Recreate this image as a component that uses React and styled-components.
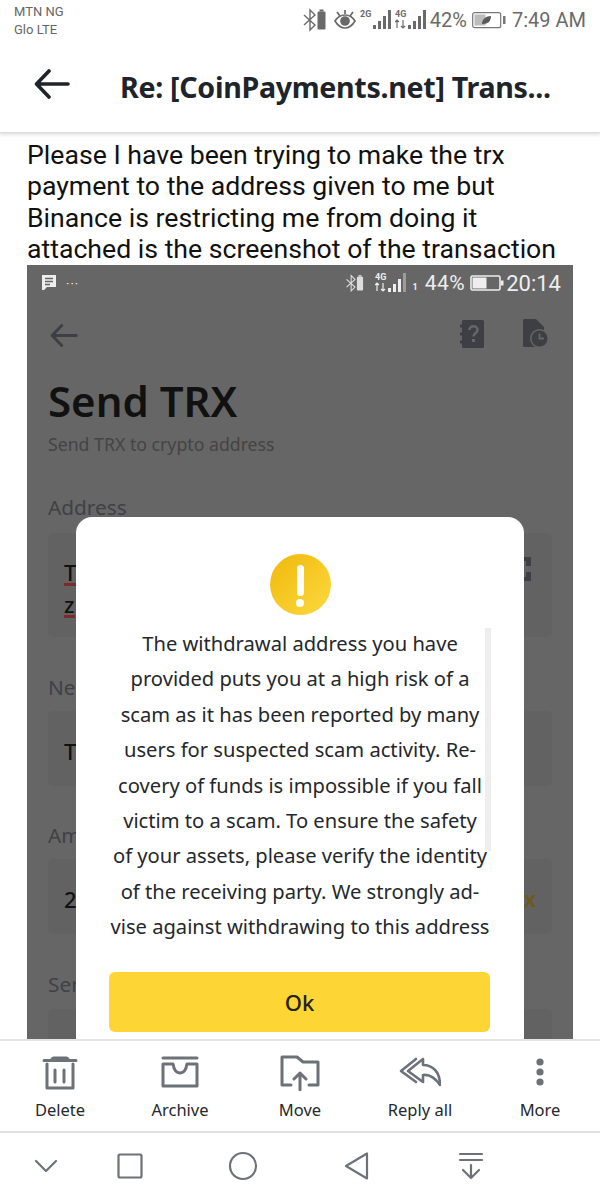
import styled, { createGlobalStyle } from 'styled-components';

const GlobalStyle = createGlobalStyle`
  html, body {
    margin: 0;
    padding: 0;
    background: #fff;
  }
`;

const Page = styled.div`
  display: flex;
  flex-direction: column;
  width: 600px;
  height: 1200px;
  overflow: hidden;
  background: #fff;
  font-family: Roboto, "Liberation Sans", sans-serif;
`;

const StatusBar = styled.div`
  display: flex;
  justify-content: space-between;
  height: 52px;
  padding: 3px 14px 0 14px;
  box-sizing: border-box;
`;

const Carriers = styled.div`
  font-size: 13px;
  line-height: 18px;
  color: #666;
`;

const StatusRight = styled.div`
  display: flex;
  align-items: center;
  align-self: flex-start;
  height: 34px;
  color: #6a6a6a;
  font-size: 20px;
`;

const BatteryPercent = styled.span`
  margin: 0 5px 0 3px;
`;

const StatusClock = styled.span`
  margin-left: 6px;
`;

const Header = styled.div`
  display: flex;
  align-items: center;
  height: 81px;
  padding: 0 0 12px 34px;
  box-sizing: border-box;
  border-bottom: 1px solid #ddd;
  box-shadow: 0 2px 3px rgba(0, 0, 0, 0.12);
  position: relative;
  z-index: 2;
  background: #fff;
`;

const HeaderBack = styled.div`
  display: flex;
  margin-bottom: 4px;
`;

const Title = styled.h1`
  margin: 0 0 0 50px;
  font-family: "Noto Sans", sans-serif;
  font-size: 28.6px;
  font-weight: 700;
  color: #20242a;
  white-space: nowrap;
  letter-spacing: -0.3px;
`;

const Message = styled.div`
  padding: 6.5px 0 0 27px;
  height: 132px;
  box-sizing: border-box;
  font-family: Roboto, sans-serif;
  font-size: 26.65px;
  line-height: 31.5px;
  color: #111;
`;

const MessageLine = styled.div`
  white-space: nowrap;
`;

const Shot = styled.div`
  position: relative;
  flex: 1;
  min-height: 0;
  margin: 0 27px;
  overflow: hidden;
  background: #666;
`;

const ShotStatus = styled.div`
  display: flex;
  align-items: center;
  height: 36px;
  padding: 0 12px 0 14px;
  color: #eee;
`;

const ShotDots = styled.span`
  margin-left: 9px;
  font-size: 13px;
  letter-spacing: 1px;
  flex: 1;
`;

const ShotBluetooth = styled.div`
  display: flex;
  margin-right: 7px;
`;

const ShotClock = styled.span`
  margin-left: 2px;
  font-size: 22px;
`;

const ShotSim = styled.span`
  align-self: flex-end;
  margin: 0 0 9px 6px;
  font-size: 9px;
  font-weight: 700;
`;

const ShotPercent = styled.span`
  margin: 0 5px 0 7px;
  font-size: 21px;
  letter-spacing: 0.5px;
`;

const ShotNav = styled.div`
  display: flex;
  align-items: center;
  height: 50px;
  padding: 15px 24px 0 23px;
  box-sizing: border-box;
  gap: 39px;
`;

const ShotBack = styled.div`
  display: flex;
  margin-top: 4px;
`;

const Spacer = styled.div`
  flex: 1;
`;

const ShotContent = styled.div`
  padding: 0 21px;
  font-family: "Noto Sans", sans-serif;
`;

const SendTitle = styled.div`
  margin-top: 25px;
  font-size: 42px;
  line-height: 50px;
  font-weight: 600;
  color: #111;
`;

const SendSub = styled.div`
  margin-top: 5px;
  font-size: 17.7px;
  line-height: 26px;
  color: #444;
`;

const FieldLabel = styled.div`
  margin-top: ${({ $top }) => $top}px;
  font-size: 20.8px;
  line-height: 28px;
  color: #3f4145;
`;

const Field = styled.div`
  position: relative;
  display: flex;
  flex-direction: column;
  justify-content: center;
  gap: 7px;
  height: ${({ $height }) => $height}px;
  margin-top: ${({ $gap }) => $gap}px;
  padding: ${({ $pad }) => $pad}px 16px 0;
  box-sizing: border-box;
  border-radius: 5px;
  background: #626262;
  font-size: 22px;
  font-weight: 500;
  color: #111;
`;

const Misspelt = styled.span`
  align-self: flex-start;
  line-height: 22px;
  border-bottom: 3px solid #7d2a2e;
`;

const Plain = styled.span`
  line-height: 25px;
`;

const Suffix = styled.span`
  position: absolute;
  right: 16px;
  top: 24px;
  font-weight: 600;
  color: #6d5a1a;
`;

const ScanIcon = styled.svg`
  position: absolute;
  right: 21px;
  top: 24px;
`;

const Modal = styled.div`
  position: absolute;
  top: 252px;
  left: 49px;
  right: 49px;
  bottom: -30px;
  display: flex;
  flex-direction: column;
  align-items: center;
  padding-top: 37px;
  border-radius: 16px;
  background: #fff;
  font-family: "Noto Sans", sans-serif;
`;

const WarnCircle = styled.div`
  position: relative;
  width: 61px;
  height: 61px;
  border-radius: 50%;
  background: linear-gradient(135deg, #f0b90b, #fcd93f);
`;

const WarnBar = styled.div`
  position: absolute;
  left: 27px;
  top: 11px;
  width: 7px;
  height: 31px;
  border-radius: 3.5px;
  background: #fff;
`;

const WarnDot = styled.div`
  position: absolute;
  left: 26.5px;
  top: 45px;
  width: 8px;
  height: 8px;
  border-radius: 50%;
  background: #fff;
`;

const ModalText = styled.div`
  position: relative;
  align-self: stretch;
  margin: 11px 33px 0 33px;
  text-align: center;
  font-size: 20.15px;
  line-height: 35.4px;
  color: #24272c;
`;

const ModalLine = styled.div`
  white-space: nowrap;
`;

const Scrollbar = styled.div`
  position: absolute;
  top: 2px;
  right: 0;
  width: 6px;
  height: 223px;
  background: #eee;
`;

const OkButton = styled.div`
  display: flex;
  align-items: center;
  justify-content: center;
  align-self: stretch;
  height: 60px;
  margin: 27px 34px 0 33px;
  border-radius: 6px;
  background: #fdd535;
  font-size: 22px;
  font-weight: 500;
  color: #23220f;
`;

const Toolbar = styled.div`
  display: grid;
  grid-template-columns: repeat(5, 120px);
  height: 92px;
  box-sizing: border-box;
  padding-top: 14px;
  border-top: 2px solid #e2e4e8;
  background: #fff;
  position: relative;
`;

const ToolButton = styled.div`
  display: flex;
  flex-direction: column;
  align-items: center;
`;

const ToolLabel = styled.span`
  margin-top: 7px;
  font-family: "Noto Sans", sans-serif;
  font-size: 16.5px;
  line-height: 24px;
  color: #25282c;
`;

const NavBar = styled.div`
  position: relative;
  display: grid;
  grid-template-columns: 92px 76px 150px 78px 150px;
  align-items: center;
  justify-items: center;
  height: 69px;
  box-sizing: border-box;
  padding-bottom: 1px;
  border-top: 2px solid #dfe1e4;
`;

const EyeSvg = styled.svg`
  margin-left: 5px;
`;

const SignalSvg = styled.svg`
  margin-left: 3px;
`;

const LeafSvg = styled.svg`
  flex: none;
`;

const GREY = '#6c7278';

const BackArrow = ({ size = 36, height = 30, color = '#20242a', width = 3.6 }) => (
  <svg width={size} height={height} viewBox="0 0 36 30" fill="none" stroke={color} strokeWidth={width} strokeLinecap="round" strokeLinejoin="round">
    <path d="M34 15H3M15 2L2.5 15L15 28" />
  </svg>
);

const Bluetooth = ({ color, size = 26 }) => (
  <svg width={size} height={(size * 24) / 26} viewBox="0 0 26 24" fill="none">
    <path d="M2 7l11 10-5 5V2l5 5L2 17" stroke={color} strokeWidth="1.4" />
    <rect x="15.5" y="3.5" width="8" height="18" rx="1.2" fill={color} />
    <rect x="17.5" y="1.5" width="4" height="2" fill={color} />
  </svg>
);

const Eye = () => (
  <EyeSvg width="24" height="22" viewBox="0 0 24 22" fill="none" stroke="#6a6a6a" strokeWidth="1.7">
    <path d="M2 12c3-5 6-6 10-6s7 1 10 6c-3 5-6 7-10 7s-7-2-10-7z" />
    <circle cx="12" cy="12" r="4" fill="#6a6a6a" />
    <path d="M4 3l3 4M12 1v4M20 3l-3 4" />
  </EyeSvg>
);

const Signal = ({ label, arrows, color = '#6a6a6a', faded }) => (
  <SignalSvg width="32" height="24" viewBox="0 0 32 24" fill={color}>
    <text x="0" y="9" fontSize="9" fontWeight="700" fontFamily="Roboto, sans-serif">{label}</text>
    {arrows && <path d="M2 12v8M0 14l2-2 2 2M8 20v-8M6 18l2 2 2-2" stroke={color} strokeWidth="1.2" fill="none" />}
    <rect x="13" y="17" width="3" height="4" />
    <rect x="18" y="13" width="3" height="8" />
    <rect x="23" y="8" width="3" height="13" />
    <rect x="28" y="2" width="3" height="19" opacity={faded ? 0.4 : 1} />
  </SignalSvg>
);

const LeafBattery = () => (
  <LeafSvg width="34" height="20" viewBox="0 0 34 20">
    <rect x="0.7" y="2.7" width="28" height="15" rx="2" fill="#fff" stroke="#777" strokeWidth="1.2" />
    <rect x="2.5" y="4.5" width="11" height="11" fill="#bcbcbc" />
    <path d="M10 14c0-5 4-8 9-8 0 5-3 8-8 8z" fill="#5a5a5a" />
    <rect x="31" y="6" width="2.5" height="8" fill="#777" />
  </LeafSvg>
);

const ShotBattery = () => (
  <svg width="34" height="18" viewBox="0 0 34 18">
    <rect x="1" y="2" width="29" height="14" rx="1.5" fill="none" stroke="#eee" strokeWidth="1.6" />
    <rect x="2.5" y="3.5" width="14" height="11" fill="#eee" />
    <rect x="31" y="6.5" width="2.5" height="5" fill="#eee" />
  </svg>
);

const NoteIcon = () => (
  <svg width="16" height="18" viewBox="0 0 16 18">
    <path d="M1 1h14v12H6l-3 3H1z" fill="#eee" />
    <path d="M4 4.5h8M4 7.5h8M4 10.5h5" stroke="#666" strokeWidth="1.3" />
  </svg>
);

const BookIcon = () => (
  <svg width="24" height="28" viewBox="0 0 24 28">
    <rect x="2" y="0" width="22" height="28" rx="1.5" fill="#3d3f44" />
    <path d="M0 6h5M0 14h5M0 22h5" stroke="#3d3f44" strokeWidth="3" strokeLinecap="round" />
    <path d="M9.5 10c0-5 8-5 8 0 0 3-4 3-4 6.5" stroke="#666" strokeWidth="2.6" fill="none" />
    <rect x="12" y="19" width="3" height="3" fill="#666" />
  </svg>
);

const DocClockIcon = () => (
  <svg width="26" height="29" viewBox="0 0 26 29">
    <path d="M0 1.5Q0 0 1.5 0H13l8 8v20H1.5Q0 28 0 26.5z" fill="#3d3f44" />
    <circle cx="16.5" cy="19.5" r="9.5" fill="#666" />
    <circle cx="16.5" cy="19.5" r="8" fill="#3d3f44" />
    <path d="M16.5 14.5v5h4.5" stroke="#666" strokeWidth="1.8" fill="none" />
  </svg>
);

const ToolIcon = ({ children }) => (
  <svg width="42" height="36" viewBox="0 0 42 36" fill="none" stroke={GREY} strokeWidth="3" strokeLinecap="round" strokeLinejoin="round">
    {children}
  </svg>
);

const tools = [
  {
    label: 'Delete',
    icon: (
      <>
        <path d="M11 5Q12 1.500 15 1.500H27Q30 1.500 31 5z" fill={GREY} stroke="none" />
        <path d="M5 5.500h32M8 9v24h26V9" />
        <path d="M16 15v12M25 15v12" />
      </>
    ),
  },
  {
    label: 'Archive',
    icon: <path d="M4 3h34M4 9h10c1 6 4 9 7 9s6-3 7-9h10v22H4z" />,
  },
  {
    label: 'Move',
    icon: <path d="M12 30H3V2h15l6 5h15v23h-9M21 35V18M15 24l6-6 6 6" />,
  },
  {
    label: 'Reply all',
    icon: (
      <g strokeWidth="2.600">
        <path d="M17 4L2 16l15 11" />
        <path d="M24 4L9 16l15 11v-7c7-1 13 4 17 10 0-13-7-20-17-20z" />
      </g>
    ),
  },
  {
    label: 'More',
    icon: (
      <g fill={GREY} stroke="none">
        <circle cx="21" cy="7" r="3.600" />
        <circle cx="21" cy="17" r="3.600" />
        <circle cx="21" cy="27" r="3.600" />
      </g>
    ),
  },
];

const NavIcon = ({ children }) => (
  <svg width="30" height="30" viewBox="0 0 30 30" fill="none" stroke={GREY} strokeWidth="2.200" strokeLinecap="round" strokeLinejoin="round">
    {children}
  </svg>
);

const messageLines = [
  'Please I have been trying to make the trx',
  'payment to the address given to me but',
  'Binance is restricting me from doing it',
  'attached is the screenshot of the transaction',
];

const modalLines = [
  'The withdrawal address you have',
  'provided puts you at a high risk of a',
  'scam as it has been reported by many',
  'users for suspected scam activity. Re-',
  'covery of funds is impossible if you fall',
  'victim to a scam. To ensure the safety',
  'of your assets, please verify the identity',
  'of the receiving party. We strongly ad-',
  'vise against withdrawing to this address',
];

const App = () => {
  return (
    <Page>
      <GlobalStyle />
      <StatusBar>
        <Carriers>
          <div>MTN NG</div>
          <div>Glo LTE</div>
        </Carriers>
        <StatusRight>
          <Bluetooth color="#6a6a6a" />
          <Eye />
          <Signal label="2G" />
          <Signal label="4G" arrows />
          <BatteryPercent>42%</BatteryPercent>
          <LeafBattery />
          <StatusClock>7:49 AM</StatusClock>
        </StatusRight>
      </StatusBar>

      <Header>
        <HeaderBack>
          <BackArrow />
        </HeaderBack>
        <Title>Re: [CoinPayments.net] Trans...</Title>
      </Header>

      <Message>
        {messageLines.map(line => (
          <MessageLine key={line}>{line}</MessageLine>
        ))}
      </Message>

      <Shot>
        <ShotStatus>
          <NoteIcon />
          <ShotDots>···</ShotDots>
          <ShotBluetooth>
            <Bluetooth color="#ddd" size={20} />
          </ShotBluetooth>
          <Signal label="4G" arrows color="#eee" faded />
          <ShotSim>1</ShotSim>
          <ShotPercent>44%</ShotPercent>
          <ShotBattery />
          <ShotClock>20:14</ShotClock>
        </ShotStatus>
        <ShotNav>
          <ShotBack>
            <BackArrow size={28} height={23} color="#3d3f44" width={3.8} />
          </ShotBack>
          <Spacer />
          <BookIcon />
          <DocClockIcon />
        </ShotNav>
        <ShotContent>
          <SendTitle>Send TRX</SendTitle>
          <SendSub>Send TRX to crypto address</SendSub>
          <FieldLabel $top={36}>Address</FieldLabel>
          <Field $height={104} $gap={12} $pad={9}>
            <Misspelt>T</Misspelt>
            <Misspelt>z</Misspelt>
            <ScanIcon width="14" height="24" viewBox="0 0 14 24" fill="#3d3f44">
              <path d="M0 0h14v9h-5V4H0zM0 24h14v-9h-5v5H0z" />
            </ScanIcon>
          </Field>
          <FieldLabel $top={36}>Ne</FieldLabel>
          <Field $height={75} $gap={10} $pad={5}>
            <Plain>T</Plain>
          </Field>
          <FieldLabel $top={35}>Am</FieldLabel>
          <Field $height={75} $gap={10} $pad={5}>
            <Plain>2</Plain>
            <Suffix>x</Suffix>
          </Field>
          <FieldLabel $top={36}>Ser</FieldLabel>
          <Field $height={75} $gap={11} $pad={5}>
            <Plain>S</Plain>
          </Field>
        </ShotContent>

        <Modal>
          <WarnCircle>
            <WarnBar />
            <WarnDot />
          </WarnCircle>
          <ModalText>
            {modalLines.map(line => (
              <ModalLine key={line}>{line}</ModalLine>
            ))}
            <Scrollbar />
          </ModalText>
          <OkButton>Ok</OkButton>
        </Modal>
      </Shot>

      <Toolbar>
        {tools.map(tool => (
          <ToolButton key={tool.label}>
            <ToolIcon>{tool.icon}</ToolIcon>
            <ToolLabel>{tool.label}</ToolLabel>
          </ToolButton>
        ))}
      </Toolbar>

      <NavBar>
        <NavIcon><path d="M5 10l10 10 10-10" /></NavIcon>
        <NavIcon><rect x="3.500" y="3.500" width="23" height="23" rx="1.500" /></NavIcon>
        <NavIcon><circle cx="15" cy="15" r="13" /></NavIcon>
        <NavIcon><path d="M25 2.500v25L4 15z" /></NavIcon>
        <NavIcon><path d="M4 3h22M4 9h22M15 14v13M7 19l8 8 8-8" /></NavIcon>
      </NavBar>
    </Page>
  );
};

export default App;
